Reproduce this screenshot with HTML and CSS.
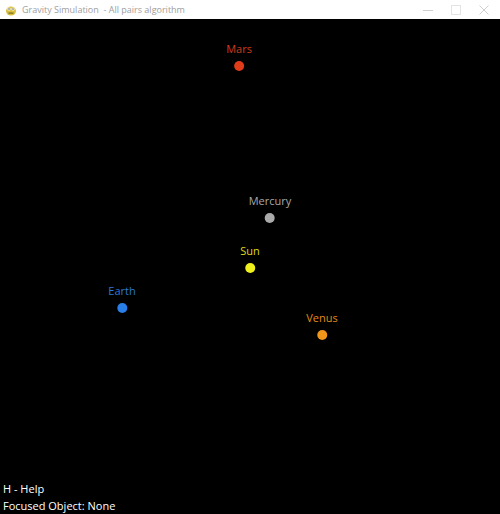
FILE: index.html
```html
<!DOCTYPE html>
<html>
<head>
<meta charset="utf-8">
<link rel="stylesheet" href="styles.css">
</head>
<body>
<div class="window">
  <div class="titlebar">
    <svg class="app-icon" width="12" height="12" viewBox="0 0 12 12">
      <ellipse cx="6" cy="7" rx="5" ry="4.5" fill="#d8c040"/>
      <circle cx="4" cy="5" r="1.6" fill="#fff"/>
      <circle cx="8" cy="5" r="1.6" fill="#fff"/>
      <circle cx="4" cy="5" r="0.7" fill="#333"/>
      <circle cx="8" cy="5" r="0.7" fill="#333"/>
      <rect x="3.5" y="8.5" width="5" height="1.2" fill="#7a6a20"/>
    </svg>
    <span class="title">Gravity Simulation &nbsp;- All pairs algorithm</span>
    <div class="controls">
      <svg width="10" height="10" viewBox="0 0 10 10"><line x1="0" y1="5.5" x2="10" y2="5.5" stroke="#cfcfcf" stroke-width="1"/></svg>
      <svg width="10" height="10" viewBox="0 0 10 10"><rect x="0.5" y="0.5" width="9" height="9" fill="none" stroke="#e4e4e4" stroke-width="1"/></svg>
      <svg width="10" height="10" viewBox="0 0 10 10"><path d="M0.5 0.5 L9.5 9.5 M9.5 0.5 L0.5 9.5" stroke="#cfcfcf" stroke-width="1"/></svg>
    </div>
  </div>
  <div class="stage">
    <div class="body mars" style="left:239px; top:23px;"><span class="label">Mars</span><span class="dot"></span></div>
    <div class="body mercury" style="left:270px; top:175px;"><span class="label">Mercury</span><span class="dot"></span></div>
    <div class="body sun" style="left:250px; top:225px;"><span class="label">Sun</span><span class="dot"></span></div>
    <div class="body earth" style="left:122px; top:265px;"><span class="label">Earth</span><span class="dot"></span></div>
    <div class="body venus" style="left:322px; top:292px;"><span class="label">Venus</span><span class="dot"></span></div>
    <div class="hud">
      <div>H - Help</div>
      <div>Focused Object: None</div>
    </div>
  </div>
</div>
</body>
</html>
```
FILE: styles.css
```css
html, body {
  margin: 0;
  padding: 0;
  background: #000;
}
.window {
  width: 500px;
  height: 514px;
  display: flex;
  flex-direction: column;
  overflow: hidden;
}
.titlebar {
  height: 19px;
  background: #fff;
  display: flex;
  align-items: center;
  padding-left: 5px;
  font-family: "Open Sans", "Noto Sans", sans-serif;
  font-size: 9px;
  color: #a0a0a0;
  flex: none;
}
.app-icon {
  margin-right: 5px;
}
.title {
  flex: 1;
  white-space: nowrap;
}
.controls {
  display: flex;
  gap: 18px;
  padding-right: 11px;
  align-items: center;
}
.stage {
  position: relative;
  flex: 1;
  background: #000;
  display: flex;
  flex-direction: column;
  justify-content: flex-end;
  font-family: "Open Sans", "Noto Sans", sans-serif;
}
.body {
  position: absolute;
  transform: translateX(-50%);
  display: flex;
  flex-direction: column;
  align-items: center;
  font-size: 11px;
  line-height: 14px;
}
.label {
  white-space: nowrap;
}
.dot {
  width: 10px;
  height: 10px;
  border-radius: 50%;
  margin-top: 5px;
}
.mars { color: #d23a1c; }
.mars .dot { background: #e03c1a; }
.mercury { color: #a8a8a8; }
.mercury .dot { background: #aaaaaa; }
.sun { color: #dcdc1c; }
.sun .dot { background: #f0f01c; }
.earth { color: #2a78dc; }
.earth .dot { background: #2a7ee8; }
.venus { color: #e38c14; }
.venus .dot { background: #f0961a; }
.hud {
  color: #fff;
  font-size: 11px;
  line-height: 17px;
  padding: 0 0 0 3px;
}
```
